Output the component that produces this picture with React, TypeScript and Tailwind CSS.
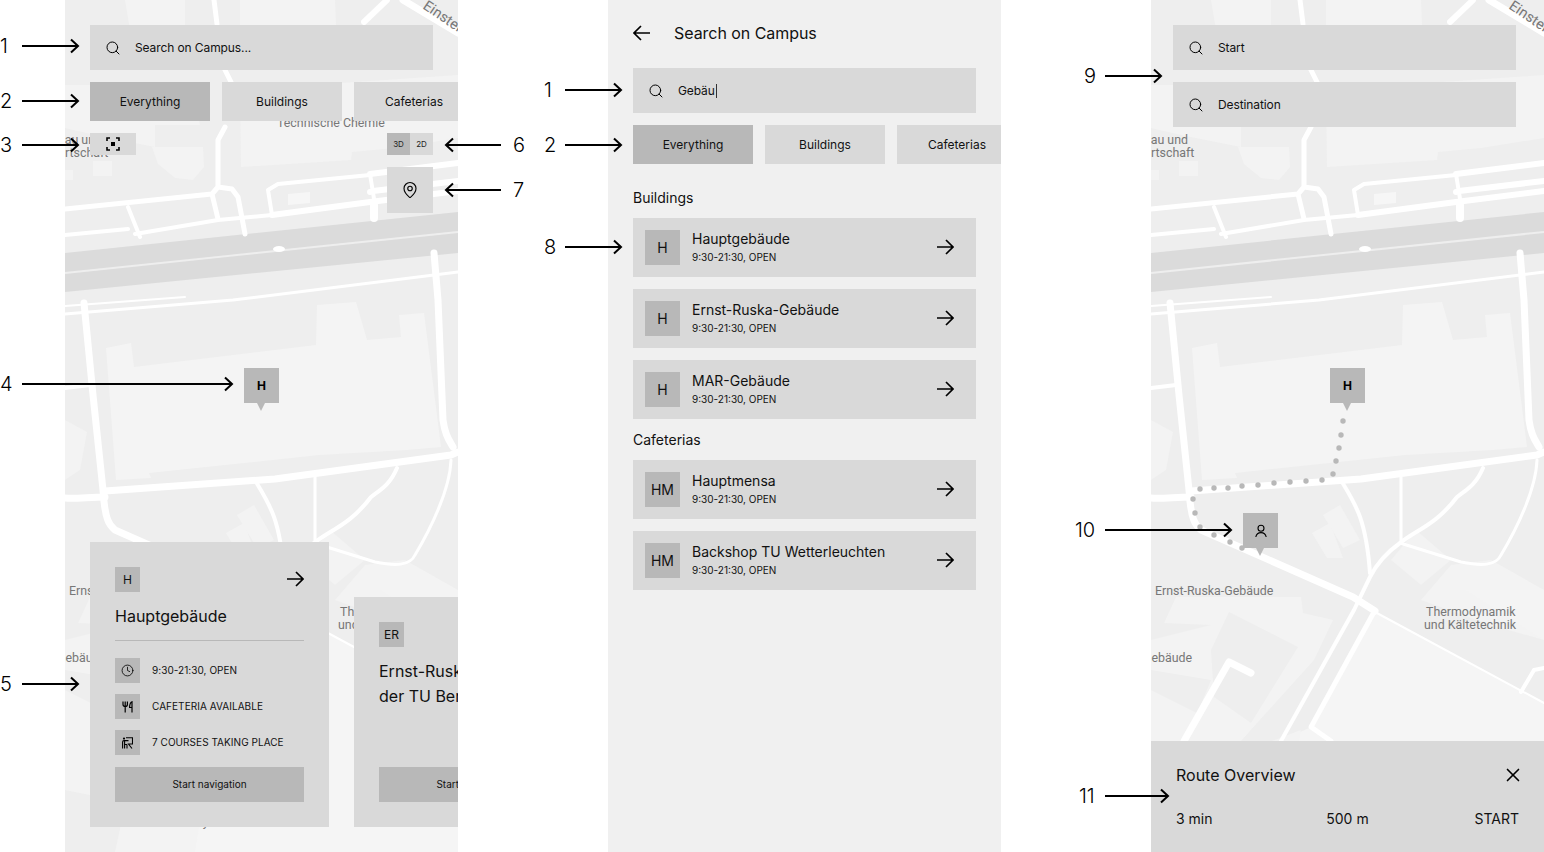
import { Clock, MapPin, Search, X } from 'lucide-react'
import type { ReactNode } from 'react'

// route dots, map coordinates
const routeDots = [
  [192, 421], [190, 435], [188, 448], [185, 461], [182, 474], [171, 480], [155, 481], [139, 482], [123, 483],
  [107, 485], [91, 486], [77, 488], [63, 488], [49, 489], [42, 499], [44, 513], [49, 527], [63, 535], [79, 542], [91, 548],
]

function CampusMap({ route = false }: { route?: boolean }) {
  return (
    <svg className="absolute inset-0" width="393" height="852" viewBox="0 0 393 852" fill="none">
      <rect width="393" height="852" fill="#eeeeee" />
      {/* buildings */}
      <g fill="#f3f3f3">
        <path d="M41 348L66 343L69 367L251 345L252 305L291 302L302 340L336 337L334 315L359 313L376 447L342 450L254 455L84 473L86 478L51 480Z" fill="#f4f4f4" />
        <path d="M0 0H60L65 30L120 28V0H0Z" />
        <path d="M175 0H270L272 50L175 55Z" />
        <path d="M87 147L138 147L139 167L128 180L110 178L93 164Z" />
        <path d="M28 161H47V176H28ZM0 170H8V180H0Z" />
        <path d="M0 85H125L135 125L90 125V147L30 135L0 128Z" />
        <path d="M175 90L393 75V138L330 148L287 152L286 160L176 167Z" />
        <path d="M223 194L245 192V203L223 205Z" fill="#f6f6f6" />
        <path d="M0 420L22 432L15 470L0 480Z" />
        <path d="M161 533L179 523L192 558L176 558Z" />
        <path d="M172 515L189 505L209 540L192 548Z" />
        <path d="M300 565L340 560L393 590V640L340 625L270 600Z" />
        <path d="M0 640L60 625L13 623L25 597L150 597L152 613L182 620L163 660L106 723L90 741H35L60 680L0 670Z" />
        <path d="M224 612L393 703V852H100L130 741L160 727Z" fill="#f5f5f5" />
        <path d="M315 590L393 640V590Z" fill="#f4f4f4" />
        <path d="M0 690L60 720L50 800L0 790Z" />
        <path d="M70 760L150 730L130 852H50Z" />
        <path d="M265 530L300 560L270 585L240 560Z" />
      </g>
      <path d="M78 612L147 647L100 723L63 697L60 650Z" fill="#eeeeee" />
      {/* rail band */}
      <path d="M0 253L393 212V253L0 292Z" fill="#dbdbdb" />
      <path d="M0 273L393 232" stroke="#eeeeee" strokeWidth="2" />
      <ellipse cx="214" cy="249" rx="6" ry="3" fill="#ffffff" />
      {/* roads */}
      <g stroke="#ffffff" strokeLinecap="round" strokeLinejoin="round">
        <path strokeWidth="5" d="M149 0L152 24M160 70L166 82M160 127L153 140L153 187M0 209L147 194L153 187L167 189L173 197L180 234M147 194L153 219" />
        <path strokeWidth="4" d="M63 207L75 237M0 235L63 229M70 234L153 220L207 215M207 215L203 190L213 184L305 175" />
        <path strokeWidth="6" d="M207 215L305 202L393 191M305 174L393 163M308 191L393 181" />
        <path strokeWidth="4" d="M305 174L310 205" />
        <path strokeWidth="8" d="M309 205V218" />
        <circle cx="305" cy="192" r="3" fill="#ffffff" stroke="none" />
        <path strokeWidth="2" d="M0 306L120 297" />
        <path strokeWidth="3" d="M0 314L168 300L393 272" />
        <path strokeWidth="7" d="M369 253L373 300L378 420C380 435 384 440 388 447M19 303L28 395L38 490C40 520 44 525 50 530L202 597L224 611" />
        <path strokeWidth="7" d="M0 498C10 499 25 497 40 497M40 491L210 479L386 455L393 452" />
        <path strokeWidth="4" d="M0 388L25 385" />
        <path strokeWidth="4" d="M191 482C205 505 215 520 219 573" />
        <path strokeWidth="3" d="M250 477V543" />
        <path strokeWidth="4" d="M332 468C325 485 315 490 306 497C285 525 265 530 249 543C235 553 225 565 219 577L203 610L130 741" />
        <path strokeWidth="3" d="M249 543L310 562C330 566 345 566 350 555C365 530 385 490 386 460" />
        <path strokeWidth="2" d="M224 612L393 703" />
        <path strokeWidth="5" d="M223 612L160 727L180 741" />
        <path strokeWidth="7" d="M33 741L78 662L100 673" />
        <path strokeWidth="4" d="M370 692L383 670L393 668" />
        <path strokeWidth="6" d="M299 22L322 0" />
        <path strokeWidth="7" d="M338 0L393 33" />
      </g>
      {/* labels */}
      <g fontFamily="Roboto, sans-serif" fontSize="12.4" fill="#777777">
        <text x="212" y="127">Technische Chemie</text>
        <text x="-8" y="144">Bau und</text>
        <text x="-14" y="157">Wirtschaft</text>
        <text x="4" y="595">Ernst-Ruska-Gebäude</text>
        <text x="-8" y="662">Gebäude</text>
        <text x="275" y="616">Thermodynamik</text>
        <text x="273" y="629">und Kältetechnik</text>
        <text x="106" y="826">Library</text>
        <text x="357" y="8" fontSize="14.5" transform="rotate(34 357 8)">Einsteinufer</text>
      </g>
      {route && routeDots.map(([x, y]) => <circle key={`${x}-${y}`} cx={x} cy={y} r="2.7" fill="#b8b8b8" />)}
    </svg>
  )
}

function ArrowGlyph({ flip = false }: { flip?: boolean }) {
  return (
    <svg width="18" height="16" viewBox="0 0 18 16" fill="none" stroke="#000" strokeWidth="1.7">
      {flip ? <path d="M17 8H1M8 1L1 8L8 15" /> : <path d="M1 8H17M10 1L17 8L10 15" />}
    </svg>
  )
}

function Callout({ n, width, flip, className, numClass }: { n: string; width: number; flip?: boolean; className: string; numClass?: string }) {
  const arrow = (
    <svg width={width} height="16" viewBox={`0 0 ${width} 16`} fill="none" stroke="#000" strokeWidth="2">
      {flip ? <path d={`M${width} 8H2M9 1.5L2 8L9 14.5`} /> : <path d={`M0 8H${width - 2}M${width - 9} 1.5L${width - 2} 8L${width - 9} 14.5`} />}
    </svg>
  )
  return (
    <div className={`absolute flex -translate-y-1/2 items-center text-[20px] font-light leading-none text-black ${className}`}>
      {flip ? arrow : <span className={numClass}>{n}</span>}
      {flip ? <span className="ml-[12px]">{n}</span> : arrow}
    </div>
  )
}

function SearchField({ children, caret }: { children: ReactNode; caret?: boolean }) {
  return (
    <div className="flex h-[45px] w-[343px] shrink-0 items-center gap-[14px] bg-[#d9d9d9] pl-[15px] text-xs tracking-[-0.1px] text-[#111]">
      <Search size={16} strokeWidth={1.5} color="#000" />
      <span className="flex items-center">
        {children}
        {caret && <span className="ml-px h-[14px] w-px bg-[#333]" />}
      </span>
    </div>
  )
}

function Chips() {
  return (
    <div className="flex shrink-0 gap-[12px] text-xs text-[#111]">
      <div className="flex h-[39px] w-[120px] shrink-0 items-center justify-center bg-[#b8b8b8]">Everything</div>
      <div className="flex h-[39px] w-[120px] shrink-0 items-center justify-center bg-[#d9d9d9]">Buildings</div>
      <div className="flex h-[39px] w-[120px] shrink-0 items-center justify-center bg-[#d9d9d9]">Cafeterias</div>
    </div>
  )
}

function Badge({ children, className }: { children: ReactNode; className: string }) {
  return <div className={`flex shrink-0 items-center justify-center bg-[#b8b8b8] ${className}`}>{children}</div>
}

function Pin({ children, className }: { children: ReactNode; className: string }) {
  return (
    <div className={`absolute flex h-[35px] w-[35px] items-center justify-center bg-[#b8b8b8] text-xs font-bold text-black ${className}`}>
      {children}
      <div className="absolute left-[13px] top-[35px] h-0 w-0 border-x-[4.5px] border-t-[8px] border-x-transparent border-t-[#b8b8b8]" />
    </div>
  )
}

function FocusIcon() {
  return (
    <svg width="14" height="14" viewBox="0 0 14 14" fill="none" stroke="#000" strokeWidth="1.6">
      <path d="M1 4V1H4M10 1H13V4M13 10V13H10M4 13H1V10" />
      <rect x="5" y="5" width="4" height="4" fill="#000" stroke="none" />
    </svg>
  )
}

function ForkIcon() {
  return (
    <svg width="12" height="12" viewBox="0 0 12 12" fill="none" stroke="#000" strokeWidth="1.2">
      <path d="M1 0.5V3.5C1 5 2 5.5 3.2 5.5C4.4 5.5 5.4 5 5.4 3.5V0.5M3.2 0.5V11.5M10 11.5V0.8C8.4 1.5 7.6 3.5 7.6 6.5H10" />
    </svg>
  )
}

function CourseIcon() {
  return (
    <svg width="11" height="12" viewBox="0 0 11 12" fill="none" stroke="#000" strokeWidth="1.1">
      <circle cx="2" cy="1.6" r="1.1" fill="#000" stroke="none" />
      <path d="M4 0.8H10.5V7H6.5L10 11.5M0.6 11.5V5C0.6 4 1.2 3.6 2 3.6H6.5M2.6 7.5H5M2.6 3.6V11.5M5 7.5V11.5" />
    </svg>
  )
}

function PersonIcon() {
  return (
    <svg width="14" height="14" viewBox="0 0 14 14" fill="none" stroke="#000" strokeWidth="1.1">
      <circle cx="7" cy="4.2" r="3" />
      <path d="M1.8 13C2.4 10 4.4 8.6 7 8.6C9.6 8.6 11.6 10 12.2 13" />
    </svg>
  )
}

function InfoRow({ icon, children }: { icon: ReactNode; children: ReactNode }) {
  return (
    <div className="flex items-center gap-[12px] text-[10px] uppercase tracking-[0.05px] text-[#111]">
      <Badge className="h-[25px] w-[25px]">{icon}</Badge>
      {children}
    </div>
  )
}

function ResultCard({ badge, title }: { badge: string; title: string }) {
  return (
    <div className="flex h-[59px] w-[343px] items-center bg-[#d9d9d9] px-[12px]">
      <Badge className="h-[35px] w-[35px] text-sm text-[#111]">{badge}</Badge>
      <div className="-mt-[2px] ml-[12px] flex-1 text-[#111]">
        <div className="text-sm leading-[17px]">{title}</div>
        <div className="mt-[4px] text-[10px] leading-[12px]">9:30-21:30, OPEN</div>
      </div>
      <div className="mr-[10px] -mt-px">
        <ArrowGlyph />
      </div>
    </div>
  )
}

function ExploreScreen() {
  return (
    <div className="relative ml-[65px] h-[852px] w-[393px] shrink-0 overflow-hidden">
      <CampusMap />
      <div className="relative flex h-full flex-col p-[25px]">
        <SearchField>Search on Campus...</SearchField>
        <div className="mt-[12px]">
          <Chips />
        </div>
        <div className="mt-[12px] flex items-center justify-between">
          <div className="flex h-[22px] w-[46px] items-center justify-center bg-[#d9d9d9]">
            <FocusIcon />
          </div>
          <div className="flex h-[22px] w-[46px] text-[8px] text-[#222]">
            <div className="flex w-[23px] items-center justify-center bg-[#b8b8b8]">3D</div>
            <div className="flex w-[23px] items-center justify-center bg-[#d9d9d9]">2D</div>
          </div>
        </div>
        <div className="mt-[12px] flex h-[46px] w-[46px] items-center justify-center self-end bg-[#d9d9d9]">
          <MapPin size={18} strokeWidth={1.5} color="#000" />
        </div>

        <div className="mt-auto flex items-end gap-[25px]">
          <div className="flex h-[285px] w-[239px] shrink-0 flex-col bg-[#d9d9d9] p-[25px] text-[#111]">
            <div className="flex items-center justify-between">
              <Badge className="h-[25px] w-[25px] text-xs">H</Badge>
              <div className="-mt-[2px]">
                <ArrowGlyph />
              </div>
            </div>
            <div className="mt-[12px] text-base leading-6">Hauptgebäude</div>
            <div className="mt-[12px] h-px bg-[#b8b8b8]" />
            <div className="mt-[17px] flex flex-col gap-[11px]">
              <InfoRow icon={<Clock size={13} strokeWidth={1.5} color="#000" />}>9:30-21:30, OPEN</InfoRow>
              <InfoRow icon={<ForkIcon />}>Cafeteria available</InfoRow>
              <InfoRow icon={<CourseIcon />}>7 courses taking place</InfoRow>
            </div>
            <div className="mt-auto flex h-[35px] items-center justify-center bg-[#b8b8b8] text-[10px]">Start navigation</div>
          </div>
          <div className="flex h-[230px] w-[239px] shrink-0 flex-col bg-[#d9d9d9] p-[25px] text-[#111]">
            <Badge className="h-[25px] w-[25px] text-xs">ER</Badge>
            <div className="mt-[12px] text-base leading-[25px]">
              Ernst-Ruska-Gebäude
              <br />
              der TU Berlin
            </div>
            <div className="mt-auto flex h-[35px] items-center justify-center bg-[#b8b8b8] text-[10px]">Start navigation</div>
          </div>
        </div>
      </div>
      <Pin className="left-[179px] top-[368px]">H</Pin>
    </div>
  )
}

function SearchScreen() {
  return (
    <div className="ml-[150px] flex h-[852px] w-[393px] shrink-0 flex-col overflow-hidden bg-[#f0f0f0] pl-[25px] pt-[22px] text-[#111]">
      <div className="flex h-[22px] items-center gap-[23px] text-base tracking-[-0.05px]">
        <ArrowGlyph flip />
        Search on Campus
      </div>
      <div className="mt-[24px]">
        <SearchField caret>Gebäu</SearchField>
      </div>
      <div className="mt-[12px]">
        <Chips />
      </div>
      <div className="mt-[25px] text-sm leading-[18px]">Buildings</div>
      <div className="mt-[11px] flex flex-col gap-[12px]">
        <ResultCard badge="H" title="Hauptgebäude" />
        <ResultCard badge="H" title="Ernst-Ruska-Gebäude" />
        <ResultCard badge="H" title="MAR-Gebäude" />
      </div>
      <div className="mt-[12px] text-sm leading-[18px]">Cafeterias</div>
      <div className="mt-[11px] flex flex-col gap-[12px]">
        <ResultCard badge="HM" title="Hauptmensa" />
        <ResultCard badge="HM" title="Backshop TU Wetterleuchten" />
      </div>
    </div>
  )
}

function RouteScreen() {
  return (
    <div className="relative ml-[150px] h-[852px] w-[393px] shrink-0 overflow-hidden">
      <CampusMap route />
      <div className="relative flex h-full flex-col">
        <div className="flex flex-col gap-[12px] pl-[22px] pt-[25px]">
          <SearchField>Start</SearchField>
          <SearchField>Destination</SearchField>
        </div>
        <div className="mt-auto h-[111px] bg-[#d9d9d9] px-[25px] pt-[23px] text-[#111]">
          <div className="flex items-center justify-between text-base leading-[22px]">
            Route Overview
            <X size={22} strokeWidth={1.8} color="#000" className="-mr-[5px]" />
          </div>
          <div className="mt-[23px] flex justify-between text-sm leading-[20px]">
            <span>3 min</span>
            <span className="ml-[8px]">500 m</span>
            <span>START</span>
          </div>
        </div>
      </div>
      <Pin className="left-[179px] top-[368px]">H</Pin>
      <Pin className="left-[92px] top-[513px]">
        <PersonIcon />
      </Pin>
    </div>
  )
}

export default function App() {
  return (
    <div className="relative flex h-[852px] w-[1544px] overflow-hidden bg-white font-['Inter',sans-serif]">
      <ExploreScreen />
      <SearchScreen />
      <RouteScreen />

      <Callout n="1" width={58} numClass="w-[22px]" className="left-0 top-[46px]" />
      <Callout n="2" width={58} numClass="w-[22px]" className="left-0 top-[101px]" />
      <Callout n="3" width={58} numClass="w-[22px]" className="left-0 top-[145px]" />
      <Callout n="4" width={212} numClass="w-[22px]" className="left-0 top-[384px]" />
      <Callout n="5" width={58} numClass="w-[22px]" className="left-0 top-[684px]" />
      <Callout n="6" width={57} flip className="left-[444px] top-[145px]" />
      <Callout n="7" width={57} flip className="left-[444px] top-[190px]" />
      <Callout n="1" width={58} numClass="w-[21px]" className="left-[544px] top-[90px]" />
      <Callout n="2" width={58} numClass="w-[21px]" className="left-[544px] top-[145px]" />
      <Callout n="8" width={58} numClass="w-[21px]" className="left-[544px] top-[247px]" />
      <Callout n="9" width={58} numClass="w-[21px]" className="left-[1084px] top-[76px]" />
      <Callout n="10" width={128} numClass="w-[30px]" className="left-[1075px] top-[530px]" />
      <Callout n="11" width={65} numClass="w-[26px]" className="left-[1079px] top-[796px]" />
    </div>
  )
}
